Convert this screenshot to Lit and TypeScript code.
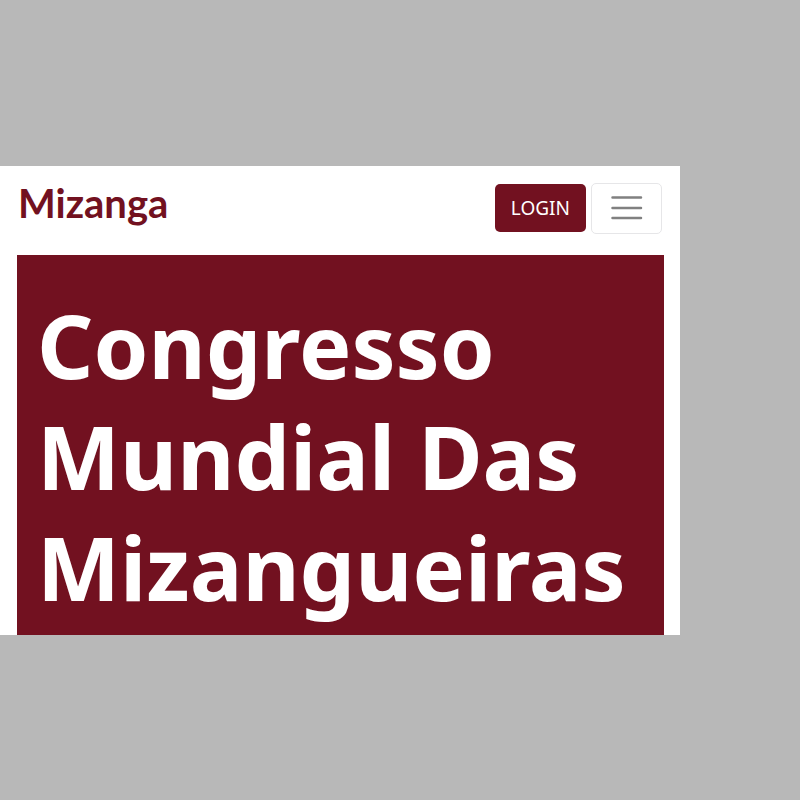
import { LitElement, html, css } from "lit";
import { customElement } from "lit/decorators.js";

@customElement("app-root")
class AppRoot extends LitElement {
  static styles = css`
    :host {
      display: flex;
      align-items: center;
      box-sizing: border-box;
      min-height: 100vh;
      background: #b8b8b8;
      font-family: "Noto Sans", "Open Sans", sans-serif;
    }
    .window {
      width: 85%;
      background: #fff;
    }
    .bar {
      display: flex;
      align-items: center;
      gap: 5px;
      padding: 17px 18px 21px;
    }
    .brand {
      align-self: flex-start;
      margin-right: auto;
      color: #721120;
      font: 700 40px/40px "Lato", sans-serif;
      text-decoration: none;
    }
    .login {
      height: 48px;
      padding: 0 16px;
      border: 0;
      border-radius: 5px;
      background: #721120;
      color: #fff;
      font: 400 19px/48px "Noto Sans", sans-serif;
    }
    .menu {
      display: flex;
      align-items: center;
      justify-content: center;
      width: 71px;
      height: 51px;
      padding: 0;
      border: 1px solid #e6e6e8;
      border-radius: 5px;
      background: #fff;
    }
    .hero {
      margin: 0 16px 0 17px;
      padding: 35px 20px 12px;
      background: #721120;
    }
    h1 {
      margin: 0;
      color: #fff;
      font: 700 88px/111px "Noto Sans", sans-serif;
    }
  `;

  render() {
    return html`
      <main class="window">
        <header class="bar">
          <a class="brand" href="#">Mizanga</a>
          <button class="login" type="button">LOGIN</button>
          <button class="menu" type="button" aria-label="Menu">
            <svg width="38" height="38" viewBox="0 0 38 38" aria-hidden="true">
              <path d="M4.5 8.5h28.5M4.5 19h28.5M4.5 29h28.5" stroke="#808080" stroke-width="2.5" stroke-linecap="round" />
            </svg>
          </button>
        </header>
        <section class="hero">
          <h1>Congresso Mundial Das Mizangueiras</h1>
        </section>
      </main>
    `;
  }
}
